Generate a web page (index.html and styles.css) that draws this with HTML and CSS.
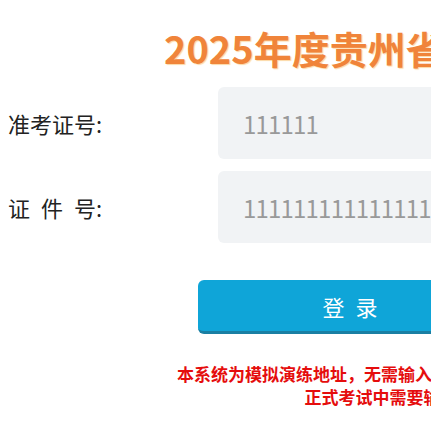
FILE: index.html
```html
<!DOCTYPE html>
<html lang="zh-CN">
<head>
<meta charset="utf-8">
<title>模拟演练登录</title>
<link rel="stylesheet" href="styles.css">
</head>
<body>
<div class="page">
  <h1 class="title">2025年度贵州省普通高等学校招生考试模拟演练</h1>
  <form class="form">
    <div class="row">
      <label class="label">准考证号:</label>
      <div class="field">111111</div>
    </div>
    <div class="row">
      <label class="label">证&ensp;件&ensp;号:</label>
      <div class="field">111111111111111111</div>
    </div>
    <div class="btn">登&ensp;录</div>
  </form>
  <div class="notice">
    <div class="line">本系统为模拟演练地址，无需输入准考证号和证件号，</div>
    <div class="line">正式考试中需要输入</div>
  </div>
</div>
</body>
</html>
```
FILE: styles.css
```css
html, body {
  margin: 0;
  padding: 0;
  overflow: hidden;
  background: #ffffff;
}
.page {
  width: 900px;
  padding: 0 0 0 8px;
  font-family: "Noto Sans CJK SC", "Noto Sans", sans-serif;
}
.title {
  margin: 0;
  padding: 22px 0 0 156px;
  font-size: 38px;
  line-height: 52px;
  font-weight: 700;
  color: #f0843a;
  text-shadow: 1px 1px 1px #fcd9a6;
  white-space: nowrap;
}
.form {
  display: flex;
  flex-direction: column;
  gap: 12px;
  margin-top: 13px;
}
.row {
  display: flex;
  align-items: center;
}
.label {
  width: 210px;
  font-size: 22px;
  color: #222222;
}
.field {
  width: 420px;
  height: 72px;
  box-sizing: border-box;
  padding-left: 25px;
  display: flex;
  align-items: center;
  background: #f1f3f5;
  border-radius: 6px;
  font-size: 24px;
  letter-spacing: -0.8px;
  color: #999999;
  white-space: nowrap;
  overflow: hidden;
}
.btn {
  margin: 25px 0 0 190px;
  width: 304px;
  height: 54px;
  box-sizing: border-box;
  border-radius: 6px;
  background: #0fa5d8;
  border-bottom: 3px solid #1a7fa3;
  color: #ffffff;
  font-size: 22px;
  display: flex;
  align-items: center;
  justify-content: center;
}
.notice {
  margin: 28px 0 0 169px;
  width: 408px;
  text-align: center;
  color: #e50d0d;
  font-size: 17px;
  line-height: 23px;
  font-weight: 700;
  white-space: nowrap;
}
```
